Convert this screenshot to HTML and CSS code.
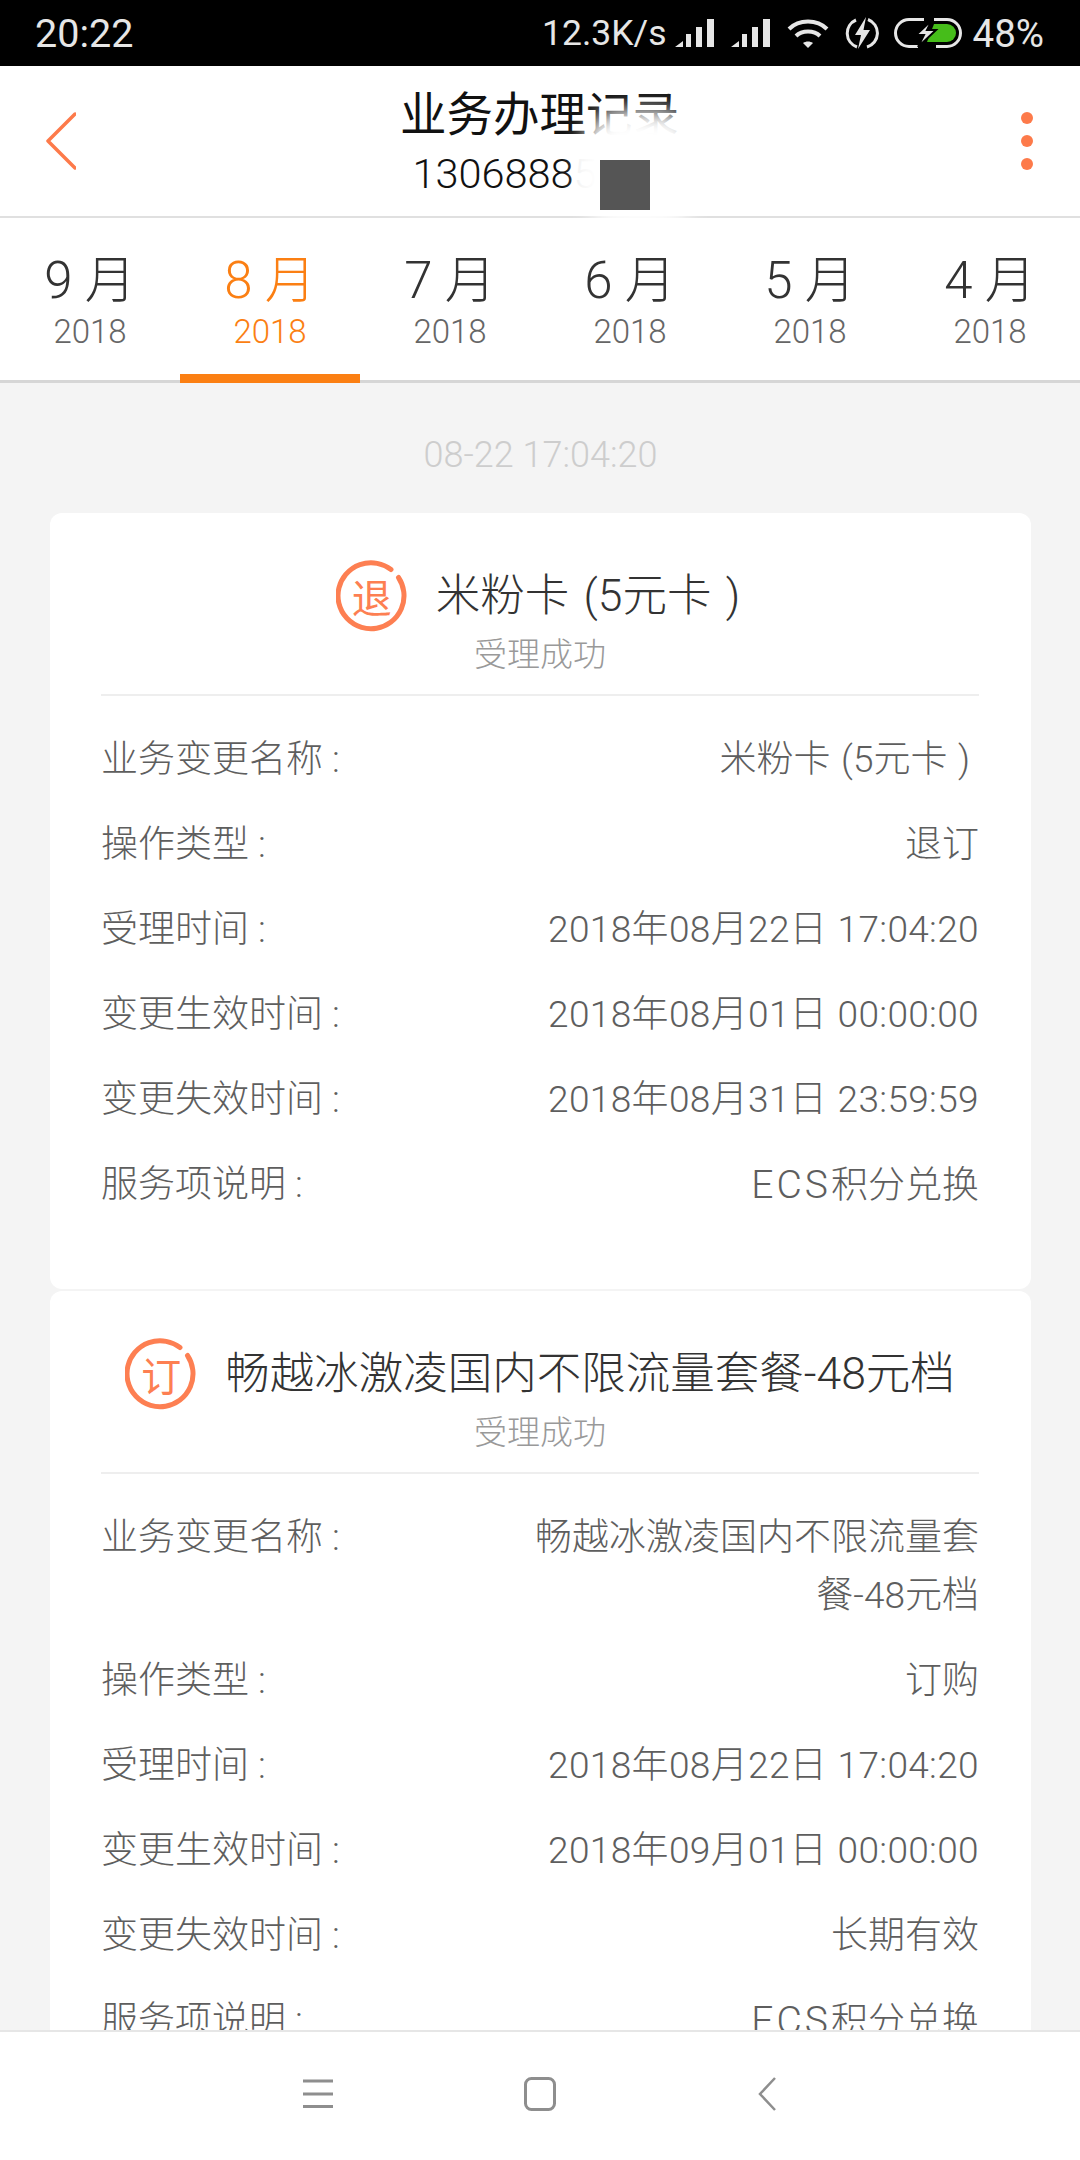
FILE: index.html
```html
<!DOCTYPE html>
<html>
<head>
<meta charset="utf-8">
<title>业务办理记录</title>
<meta name="viewport" content="width=device-width">
<link rel="stylesheet" href="styles.css">
</head>
<body>
<div class="status">
  <span class="clock">20:22</span>
  <div class="status-right">
    <span class="speed">12.3K/s</span>
    <svg class="signal" viewBox="0 0 40 29"><path d="M0 28 L8 22 V28 Z M11 15 H16 V28 H11 Z M21 8 H27 V28 H21 Z M32 0 H39 V28 H32 Z" fill="#e6e6e6"/></svg>
    <svg class="signal" viewBox="0 0 40 29"><path d="M0 28 L8 22 V28 Z M11 15 H16 V28 H11 Z M21 8 H27 V28 H21 Z M32 0 H39 V28 H32 Z" fill="#e6e6e6"/></svg>
    <svg class="wifi" viewBox="0 0 42 31"><g fill="none" stroke="#e6e6e6" stroke-width="4"><path d="M2 11 C12 1 30 1 40 11"/><path d="M9 18 C15 12 27 12 33 18"/></g><path d="M16 25 C19 23 23 23 26 25 L21 30 Z" fill="#e6e6e6"/></svg>
    <svg class="bolt" viewBox="0 0 34 34"><path d="M11 4 A14.500 14.500 0 0 0 12 31 M23 3.500 A14.500 14.500 0 0 1 22 31" fill="none" stroke="#e6e6e6" stroke-width="3"/><path d="M21 1 L10 19 H16 L13 33 L25 14 H18.500 Z" fill="#e6e6e6"/></svg>
    <svg class="battery" viewBox="0 0 68 30"><path d="M30 1.500 H15 A13.500 13.500 0 0 0 15 28.500 H24 M42 28.500 H53 A13.500 13.500 0 0 0 53 1.500 H40" fill="none" stroke="#e6e6e6" stroke-width="3"/><path d="M40 6 H53 A9 9 0 0 1 53 24 H33 Z" fill="#46bd1a"/><path d="M38 2 L22 17 H30 L24 29 L42 12 H33 Z" fill="#e6e6e6" stroke="#000" stroke-width="2"/></svg>
    <span class="level">48%</span>
  </div>
</div>

<div class="topbar">
  <svg class="back" viewBox="0 0 30 58"><path d="M29 2 L2 29 L29 56" fill="none" stroke="#fd7a4a" stroke-width="3.500" stroke-linecap="round" stroke-linejoin="round"/></svg>
  <div class="heading">
    <div class="heading-title">业务办理记录</div>
    <div class="heading-phone">1306888<span class="faded">5</span></div>
  </div>
  <div class="more"><i></i><i></i><i></i></div>
  <div class="smudge"></div>
  <div class="redact"></div>
</div>

<div class="tabs">
  <div class="tab"><b>9 月</b><span>2018</span></div>
  <div class="tab on"><b>8 月</b><span>2018</span></div>
  <div class="tab"><b>7 月</b><span>2018</span></div>
  <div class="tab"><b>6 月</b><span>2018</span></div>
  <div class="tab"><b>5 月</b><span>2018</span></div>
  <div class="tab"><b>4 月</b><span>2018</span></div>
</div>

<div class="main">
  <div class="stamp">08-22 17:04:20</div>

  <div class="card">
    <div class="card-head">
      <div class="badge">
        <svg viewBox="0 0 72 72"><path d="M55 9.500 A33 33 0 1 0 62.500 17.500" fill="none" stroke="#fd7f52" stroke-width="5" stroke-linecap="round"/></svg>
        <span>退</span>
      </div>
      <div class="card-name paren">米粉卡 (5元卡 )</div>
    </div>
    <div class="card-state">受理成功</div>
    <div class="rows">
      <div class="row"><label>业务变更名称 :</label><div class="val paren">米粉卡 (5元卡 )</div></div>
      <div class="row"><label>操作类型 :</label><div class="val">退订</div></div>
      <div class="row"><label>受理时间 :</label><div class="val when">2018年08月22日 17:04:20</div></div>
      <div class="row"><label>变更生效时间 :</label><div class="val when">2018年08月01日 00:00:00</div></div>
      <div class="row"><label>变更失效时间 :</label><div class="val when">2018年08月31日 23:59:59</div></div>
      <div class="row"><label>服务项说明 :</label><div class="val"><span class="latin">ECS</span>积分兑换</div></div>
    </div>
  </div>

  <div class="card">
    <div class="card-head">
      <div class="badge">
        <svg viewBox="0 0 72 72"><path d="M55 9.500 A33 33 0 1 0 62.500 17.500" fill="none" stroke="#fd7f52" stroke-width="5" stroke-linecap="round"/></svg>
        <span>订</span>
      </div>
      <div class="card-name">畅越冰激凌国内不限流量套餐-48元档</div>
    </div>
    <div class="card-state">受理成功</div>
    <div class="rows">
      <div class="row"><label>业务变更名称 :</label><div class="val">畅越冰激凌国内不限流量套餐-48元档</div></div>
      <div class="row"><label>操作类型 :</label><div class="val">订购</div></div>
      <div class="row"><label>受理时间 :</label><div class="val when">2018年08月22日 17:04:20</div></div>
      <div class="row"><label>变更生效时间 :</label><div class="val when">2018年09月01日 00:00:00</div></div>
      <div class="row"><label>变更失效时间 :</label><div class="val">长期有效</div></div>
      <div class="row"><label>服务项说明 :</label><div class="val"><span class="latin">ECS</span>积分兑换</div></div>
    </div>
  </div>
</div>

<div class="navbar">
  <svg viewBox="0 0 30 30" class="nav-menu"><path d="M0 2 H30 M0 15 H30 M0 27.500 H30" stroke="#8e8e8e" stroke-width="3"/></svg>
  <svg viewBox="0 0 32 34" class="nav-home"><rect x="1.500" y="1.500" width="29" height="31" rx="6" fill="none" stroke="#8e8e8e" stroke-width="3"/></svg>
  <svg viewBox="0 0 20 34" class="nav-back"><path d="M18 1 L3 17 L18 33" fill="none" stroke="#8e8e8e" stroke-width="2.500"/></svg>
</div>
</body>
</html>
```

FILE: styles.css
```css
* {
  box-sizing: border-box;
}
html, body {
  margin: 0;
  height: 2160px;
  overflow: hidden;
}
body {
  display: flex;
  flex-direction: column;
  background: #f4f4f4;
  font-family: Roboto, "Noto Sans CJK SC", sans-serif;
  font-weight: 300;
  color: #5e5e5e;
}

/* status bar */
.status {
  height: 66px;
  flex: none;
  display: flex;
  align-items: center;
  justify-content: space-between;
  padding: 0 36px 0 35px;
  background: #000;
  color: #e6e6e6;
  font-size: 39.500px;
  font-weight: 400;
}
.status-right {
  display: flex;
  align-items: center;
}
.speed { font-size: 35.500px; margin-right: 8px; }
.signal { width: 40px; height: 29px; margin-right: 16px; }
.wifi { width: 42px; height: 31px; margin-right: 16px; }
.bolt { width: 34px; height: 34px; margin-right: 15px; }
.battery { width: 68px; height: 30px; margin-right: 11px; }
.level { font-size: 38.500px; }

/* title bar */
.topbar {
  height: 152px;
  flex: none;
  position: relative;
  display: flex;
  align-items: center;
  justify-content: space-between;
  padding: 0 47px 0 46px;
  background: #fff;
  border-bottom: 2px solid #e0e0e0;
}
.back {
  width: 30px;
  height: 58px;
}
.heading {
  text-align: center;
  color: #111;
  padding-top: 6px;
}
.heading-title {
  font-size: 46.500px;
  line-height: 60px;
  font-weight: 400;
}
.heading-phone {
  font-size: 41.500px;
  line-height: 58px;
  padding-right: 70px;
}
.faded {
  color: #eee;
}
.more {
  width: 30px;
  display: flex;
  flex-direction: column;
  align-items: flex-end;
  gap: 11px;
}
.more i {
  display: block;
  width: 12px;
  height: 12px;
  border-radius: 50%;
  background: #fd7a4a;
}
/* the wiped patch round the hidden digits */
.smudge {
  position: absolute;
  left: 582px;
  top: 44px;
  width: 116px;
  height: 118px;
  border-radius: 40px;
  background: #fff;
  filter: blur(10px);
}
.redact {
  position: absolute;
  left: 600px;
  top: 94px;
  width: 50px;
  height: 50px;
  background: #555;
}

/* month tabs */
.tabs {
  height: 165px;
  flex: none;
  display: flex;
  background: #fff;
  border-bottom: 3px solid #d6d6d6;
}
.tab {
  width: 180px;
  display: flex;
  flex-direction: column;
  align-items: center;
  padding-top: 35px;
  margin-bottom: -3px;
}
.tab b {
  font-size: 51px;
  line-height: 56px;
  font-weight: 300;
  color: #333;
  white-space: pre;
}
.tab span {
  font-size: 33px;
  line-height: 42px;
  margin-top: 2px;
  color: #666;
}
.tab.on {
  border-bottom: 9px solid #fb7f13;
}
.tab.on b, .tab.on span {
  color: #fb7f13;
}

/* list */
.main {
  flex: 1;
  overflow: hidden;
  padding: 0 49px 0 50px;
}
.stamp {
  text-align: center;
  font-size: 36px;
  line-height: 40px;
  color: #cdcdcd;
  padding-top: 52px;
  height: 130px;
}
.card {
  background: #fff;
  border-radius: 12px;
  padding: 0 52px 0 51px;
  margin-bottom: 2px;
  height: 776px;
}
.card-head {
  display: flex;
  align-items: center;
  justify-content: center;
  gap: 28px;
  padding-top: 47px;
}
.badge {
  width: 72px;
  height: 72px;
  display: grid;
  place-items: center;
  color: #fd7f52;
  font-size: 40px;
  font-weight: 400;
}
.badge svg, .badge span {
  grid-area: 1 / 1;
}
.badge svg {
  width: 72px;
  height: 72px;
}
.card-name {
  font-size: 44.500px;
  line-height: 48px;
  color: #333;
  white-space: nowrap;
}
.card-name.paren {
  word-spacing: 3.500px;
  padding-right: 4px;
}
.card-state {
  text-align: center;
  font-size: 33px;
  line-height: 42px;
  color: #999;
  margin-top: 2px;
  padding-bottom: 18px;
  border-bottom: 2px solid #eee;
}
.rows {
  padding-top: 35px;
}
.row {
  display: flex;
  justify-content: space-between;
  font-size: 37px;
  line-height: 58px;
  margin-bottom: 27px;
}
.row label {
  flex: none;
}
.val {
  max-width: 450px;
  text-align: right;
}
.val.paren {
  word-spacing: 1.500px;
  padding-right: 9px;
}
.when {
  letter-spacing: 0.350px;
  word-spacing: 1px;
}
.latin {
  font-size: 39px;
  letter-spacing: 3px;
}

/* android nav */
.navbar {
  height: 130px;
  flex: none;
  display: flex;
  align-items: center;
  background: #fff;
  border-top: 2px solid #e6e6e6;
  padding: 0 0 4px 303px;
}
.nav-menu { width: 30px; height: 30px; margin-right: 191px; }
.nav-home { width: 32px; height: 34px; margin-right: 201px; }
.nav-back { width: 20px; height: 34px; }
```
